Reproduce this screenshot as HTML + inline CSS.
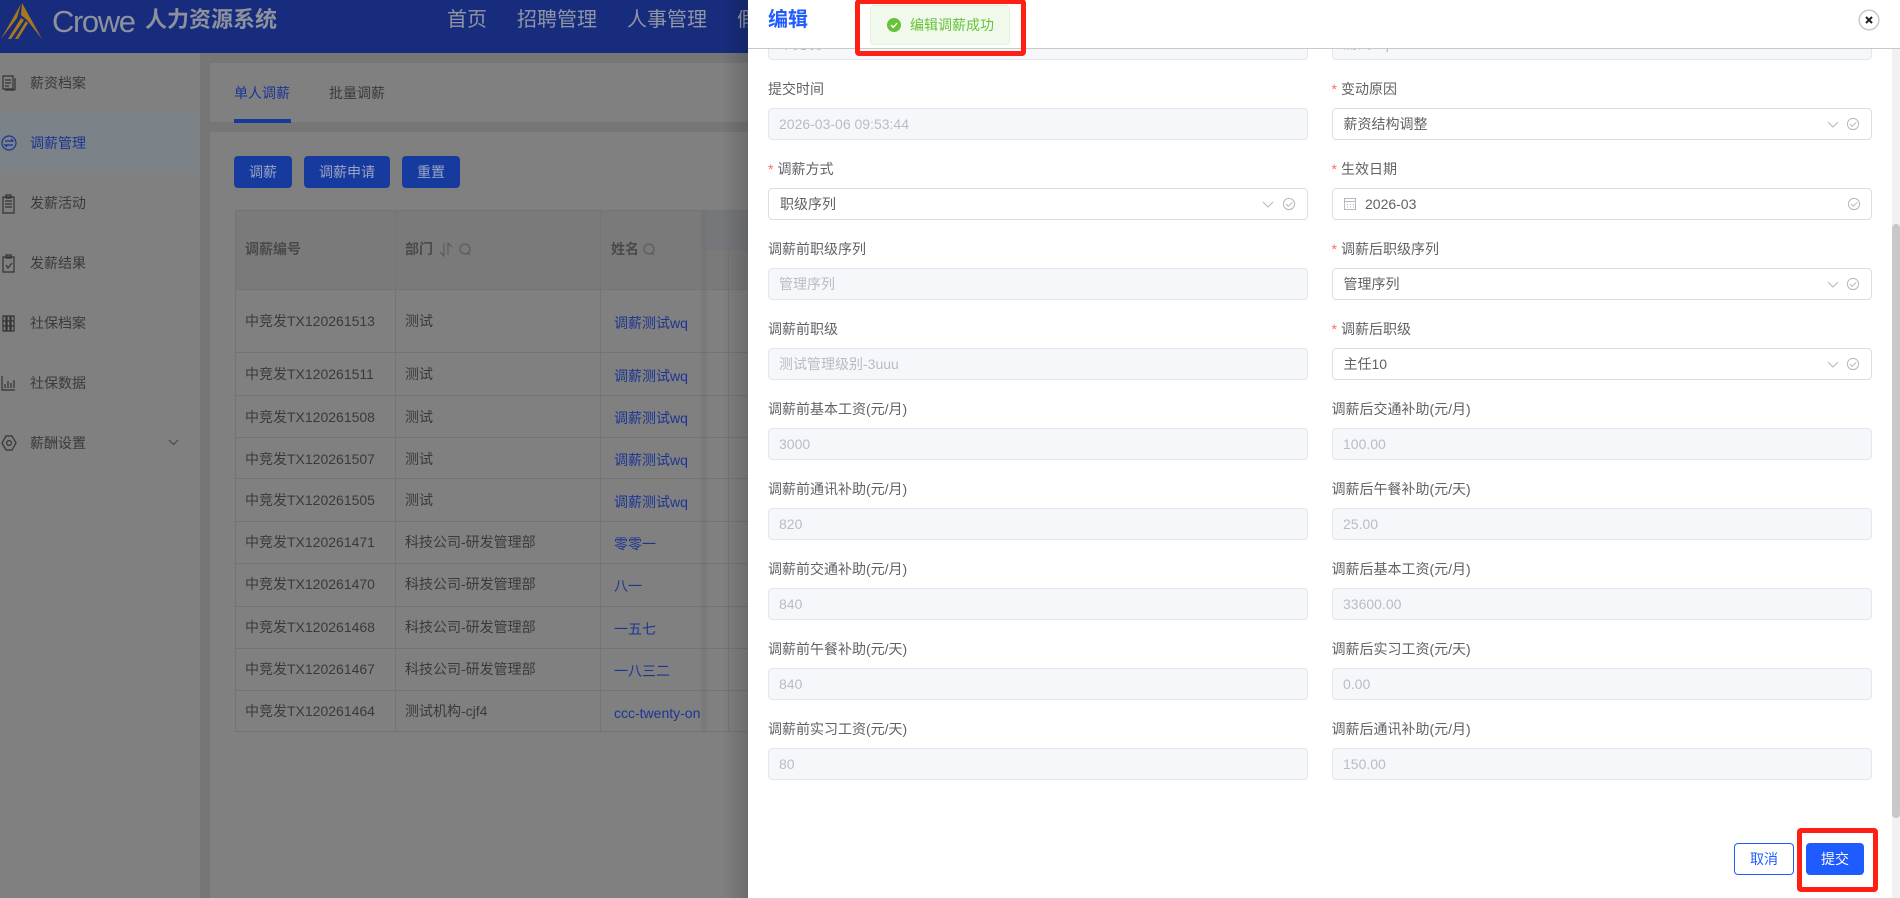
<!DOCTYPE html>
<html lang="zh"><head><meta charset="utf-8"><title>编辑</title>
<style>
*{box-sizing:border-box}
html,body{margin:0;padding:0;width:1900px;height:898px;overflow:hidden;background:#808080}
body{font-family:"Liberation Sans","Noto Sans CJK SC",sans-serif;font-size:14px;position:relative}
.a{position:absolute;white-space:nowrap}
.c{transform:translateY(-50%);line-height:20px}
.m{color:#3a3a3a}
.nm{color:#1b3593}
.ln{position:absolute;background:#737378}
.btn{position:absolute;top:156px;height:32px;background:#173a9e;border-radius:4px;color:#9aa4c4;line-height:32px;text-align:center}
.lb{position:absolute;color:#606266;line-height:20px;white-space:nowrap}
.lb i{color:#f56c6c;font-style:normal;margin-right:4px}
.in{position:absolute;width:540px;height:32px;border-radius:4px;line-height:30px;padding-left:10px;white-space:nowrap}
.d{background:#f5f7fa;border:1px solid #e4e7ed;color:#b9bcc4}
.s{background:#fff;border:1px solid #dcdfe6;color:#606266;padding-left:11px}
.ic{position:absolute;top:0;left:0}
</style></head><body>

<!-- header -->
<div class="a" style="left:0;top:0;width:748px;height:53px;background:#172c7c"></div>
<svg class="ic" width="46" height="42" viewBox="0 0 46 42"><path d="M22 3 L42 39 L27 20 L21 15 Z" fill="#a8781a"/><path d="M21 4 L1 39 L17 18 Z" fill="#a8781a"/><path d="M21 18 L8 39 L11 39 L24 20 Z M26 21 L15 39 L18 39 L28 23 Z" fill="#a8781a"/></svg>
<div class="a c" style="left:52px;top:22px;font-size:31px;line-height:34px;color:#8d919e;letter-spacing:-1.4px">Crowe</div>
<div class="a c" style="left:145px;top:20px;font-size:22px;font-weight:700;color:#8d919e">人力资源系统</div>
<div class="a c" style="left:447px;top:20px;font-size:20px;color:#8f94a6">首页</div>
<div class="a c" style="left:517px;top:20px;font-size:20px;color:#8f94a6">招聘管理</div>
<div class="a c" style="left:627px;top:20px;font-size:20px;color:#8f94a6">人事管理</div>
<div class="a c" style="left:737px;top:20px;font-size:20px;color:#8f94a6;width:11px;overflow:hidden">假期</div>

<!-- sidebar and gutters -->
<div class="a" style="left:200px;top:53px;width:548px;height:845px;background:#767676"></div>
<div class="a" style="left:0;top:113px;width:200px;height:60px;background:#7b8288"></div>
<svg class="ic" width="24" height="460" fill="none" stroke="#333" stroke-width="1.2">
<path d="M3 76h10v13H3zM5 90h10M15 78v12M5 80h6M5 83h6M5 86h4"/>
<circle cx="9" cy="143" r="7" stroke="#1b3593"/><path d="M5 141h8l-2-2M13 145H5l2 2" stroke="#1b3593"/>
<path d="M3 197h11v16H3zM6 195h5v3H6zM5 201h7M5 204h7M5 207h7"/>
<path d="M3 257h11v15H3zM6 255h5v3H6zM6 265l2 3 4-5"/>
<path d="M3 316h3v15H3zM7 316h3v15H7zM11 316h3v15h-3zM3 321h11M3 326h11"/>
<path d="M2 376v14h13M5 388v-4M8 388v-7M11 388v-5M14 388v-8"/>
<path d="M6 436h6l4 7-4 7H6l-4-7z"/><circle cx="9" cy="443" r="2.4"/>
</svg>
<div class="a c m" style="left:30px;top:83px">薪资档案</div>
<div class="a c nm" style="left:30px;top:143px">调薪管理</div>
<div class="a c m" style="left:30px;top:203px">发薪活动</div>
<div class="a c m" style="left:30px;top:263px">发薪结果</div>
<div class="a c m" style="left:30px;top:323px">社保档案</div>
<div class="a c m" style="left:30px;top:383px">社保数据</div>
<div class="a c m" style="left:30px;top:443px">薪酬设置</div>
<svg class="ic" style="left:168px;top:438px" width="11" height="9" fill="none" stroke="#444"><path d="M1 2l4.5 4.5L10 2"/></svg>

<!-- cards -->
<div class="a" style="left:210px;top:63px;width:538px;height:59px;background:#808080"></div>
<div class="a" style="left:210px;top:132px;width:538px;height:766px;background:#808080"></div>
<div class="a c nm" style="left:234px;top:93px">单人调薪</div>
<div class="a c m" style="left:329px;top:93px">批量调薪</div>
<div class="a" style="left:234px;top:119px;width:57px;height:4px;background:#173a9e"></div>
<div class="btn" style="left:234px;width:58px">调薪</div>
<div class="btn" style="left:304px;width:86px">调薪申请</div>
<div class="btn" style="left:402px;width:58px">重置</div>

<!-- table -->
<div class="a" style="left:235px;top:210px;width:513px;height:79px;background:#7a7a7a"></div>
<div class="a" style="left:701px;top:210px;width:47px;height:39px;background:#75777a"></div>
<div class="ln" style="left:235px;top:210px;width:513px;height:1px"></div>
<div class="ln" style="left:701px;top:249px;width:47px;height:1px"></div>
<div class="ln" style="left:235px;top:289px;width:513px;height:1px"></div>
<div class="ln" style="left:235px;top:352px;width:513px;height:1px"></div>
<div class="ln" style="left:235px;top:395px;width:513px;height:1px"></div>
<div class="ln" style="left:235px;top:437px;width:513px;height:1px"></div>
<div class="ln" style="left:235px;top:478px;width:513px;height:1px"></div>
<div class="ln" style="left:235px;top:521px;width:513px;height:1px"></div>
<div class="ln" style="left:235px;top:563px;width:513px;height:1px"></div>
<div class="ln" style="left:235px;top:606px;width:513px;height:1px"></div>
<div class="ln" style="left:235px;top:648px;width:513px;height:1px"></div>
<div class="ln" style="left:235px;top:690px;width:513px;height:1px"></div>
<div class="ln" style="left:235px;top:731px;width:513px;height:1px"></div>
<div class="ln" style="left:235px;top:210px;width:1px;height:522px"></div>
<div class="ln" style="left:395px;top:210px;width:1px;height:522px"></div>
<div class="ln" style="left:600px;top:210px;width:1px;height:522px"></div>
<div class="ln" style="left:728px;top:249px;width:1px;height:483px"></div>
<div class="a" style="left:701px;top:210px;width:6px;height:522px;background:#707070;opacity:.35"></div>

<div class="a c" style="left:245px;top:249px;font-weight:700;color:#4a4a4a">调薪编号</div>
<div class="a c" style="left:405px;top:249px;font-weight:700;color:#4a4a4a">部门</div>
<div class="a c" style="left:611px;top:249px;font-weight:700;color:#4a4a4a">姓名</div>
<svg class="ic" style="left:439px;top:242px" width="34" height="15" fill="none" stroke="#555"><path d="M5 1v13L1 10M9 13V1l4 4"/><circle cx="26" cy="7" r="5"/><path d="M29 11l2 2"/></svg>
<svg class="ic" style="left:641px;top:242px" width="16" height="15" fill="none" stroke="#555"><circle cx="8" cy="7" r="5"/><path d="M11 11l2 2"/></svg>

<div class="a c m" style="left:245px;top:321px">中竞发TX120261513</div><div class="a c m" style="left:405px;top:321px">测试</div><div class="a c nm" style="left:614px;top:323px">调薪测试wq</div>
<div class="a c m" style="left:245px;top:374px">中竞发TX120261511</div><div class="a c m" style="left:405px;top:374px">测试</div><div class="a c nm" style="left:614px;top:376px">调薪测试wq</div>
<div class="a c m" style="left:245px;top:417px">中竞发TX120261508</div><div class="a c m" style="left:405px;top:417px">测试</div><div class="a c nm" style="left:614px;top:418px">调薪测试wq</div>
<div class="a c m" style="left:245px;top:459px">中竞发TX120261507</div><div class="a c m" style="left:405px;top:459px">测试</div><div class="a c nm" style="left:614px;top:460px">调薪测试wq</div>
<div class="a c m" style="left:245px;top:500px">中竞发TX120261505</div><div class="a c m" style="left:405px;top:500px">测试</div><div class="a c nm" style="left:614px;top:502px">调薪测试wq</div>
<div class="a c m" style="left:245px;top:542px">中竞发TX120261471</div><div class="a c m" style="left:405px;top:542px">科技公司-研发管理部</div><div class="a c nm" style="left:614px;top:544px">零零一</div>
<div class="a c m" style="left:245px;top:584px">中竞发TX120261470</div><div class="a c m" style="left:405px;top:584px">科技公司-研发管理部</div><div class="a c nm" style="left:614px;top:586px">八一</div>
<div class="a c m" style="left:245px;top:627px">中竞发TX120261468</div><div class="a c m" style="left:405px;top:627px">科技公司-研发管理部</div><div class="a c nm" style="left:614px;top:629px">一五七</div>
<div class="a c m" style="left:245px;top:669px">中竞发TX120261467</div><div class="a c m" style="left:405px;top:669px">科技公司-研发管理部</div><div class="a c nm" style="left:614px;top:671px">一八三二</div>
<div class="a c m" style="left:245px;top:711px">中竞发TX120261464</div><div class="a c m" style="left:405px;top:711px">测试机构-cjf4</div><div class="a c nm" style="left:614px;top:713px;width:87px;overflow:hidden">ccc-twenty-one</div>

<div class="a" style="left:722px;top:0;width:26px;height:898px;background:linear-gradient(90deg,rgba(0,0,0,0),rgba(0,0,0,.16))"></div>

<!-- drawer -->
<div class="a" style="left:748px;top:0;width:1152px;height:898px;background:#fff"></div>

<div class="in d" style="left:768px;top:28px">中竞发</div>
<div class="in d" style="left:1332px;top:28px">测试wq</div>

<div class="a" style="left:748px;top:0;width:1152px;height:49px;background:#fff;border-bottom:1px solid #c9c9c9"></div>
<div class="a c" style="left:768px;top:20px;font-size:20px;font-weight:700;color:#1f5cff">编辑</div>
<svg class="ic" style="left:1858px;top:9px" width="22" height="22" fill="none"><circle cx="11" cy="11" r="9.8" stroke="#ccc" stroke-width="1.6"/><path d="M8 8l6 6M14 8l-6 6" stroke="#222" stroke-width="2"/></svg>

<div class="a" style="left:1892px;top:49px;width:8px;height:849px;background:#f1f1f1"></div>
<div class="a" style="left:1892px;top:224px;width:8px;height:594px;background:#c8c8c8;border-radius:4px"></div>

<!-- form left -->
<div class="lb" style="left:768px;top:79px">提交时间</div><div class="in d" style="left:768px;top:108px">2026-03-06 09:53:44</div>
<div class="lb" style="left:768px;top:159px"><i>*</i>调薪方式</div><div class="in s" style="left:768px;top:188px">职级序列</div>
<div class="lb" style="left:768px;top:239px">调薪前职级序列</div><div class="in d" style="left:768px;top:268px">管理序列</div>
<div class="lb" style="left:768px;top:319px">调薪前职级</div><div class="in d" style="left:768px;top:348px">测试管理级别-3uuu</div>
<div class="lb" style="left:768px;top:399px">调薪前基本工资(元/月)</div><div class="in d" style="left:768px;top:428px">3000</div>
<div class="lb" style="left:768px;top:479px">调薪前通讯补助(元/月)</div><div class="in d" style="left:768px;top:508px">820</div>
<div class="lb" style="left:768px;top:559px">调薪前交通补助(元/月)</div><div class="in d" style="left:768px;top:588px">840</div>
<div class="lb" style="left:768px;top:639px">调薪前午餐补助(元/天)</div><div class="in d" style="left:768px;top:668px">840</div>
<div class="lb" style="left:768px;top:719px">调薪前实习工资(元/天)</div><div class="in d" style="left:768px;top:748px">80</div>

<!-- form right -->
<div class="lb" style="left:1331.500px;top:79px"><i>*</i>变动原因</div><div class="in s" style="left:1332px;top:108px;padding-left:10.500px">薪资结构调整</div>
<div class="lb" style="left:1331.500px;top:159px"><i>*</i>生效日期</div><div class="in s" style="left:1332px;top:188px;padding-left:32px">2026-03</div>
<div class="lb" style="left:1331.500px;top:239px"><i>*</i>调薪后职级序列</div><div class="in s" style="left:1332px;top:268px;padding-left:10.500px">管理序列</div>
<div class="lb" style="left:1331.500px;top:319px"><i>*</i>调薪后职级</div><div class="in s" style="left:1332px;top:348px;padding-left:10.500px">主任10</div>
<div class="lb" style="left:1331.500px;top:399px">调薪后交通补助(元/月)</div><div class="in d" style="left:1332px;top:428px">100.00</div>
<div class="lb" style="left:1331.500px;top:479px">调薪后午餐补助(元/天)</div><div class="in d" style="left:1332px;top:508px">25.00</div>
<div class="lb" style="left:1331.500px;top:559px">调薪后基本工资(元/月)</div><div class="in d" style="left:1332px;top:588px">33600.00</div>
<div class="lb" style="left:1331.500px;top:639px">调薪后实习工资(元/天)</div><div class="in d" style="left:1332px;top:668px">0.00</div>
<div class="lb" style="left:1331.500px;top:719px">调薪后通讯补助(元/月)</div><div class="in d" style="left:1332px;top:748px">150.00</div>

<!-- select icons -->
<svg class="ic" width="1900" height="400" fill="none" stroke="#b5b8bf" stroke-width="1" style="pointer-events:none">
<path d="M1263 202l5 5 5-5"/><circle cx="1289" cy="204" r="5.6"/><path d="M1286 204l2.3 2.3 4-4"/>
<path d="M1828 122l5 5 5-5"/><circle cx="1853" cy="124" r="5.6"/><path d="M1850 124l2.3 2.3 4-4"/>
<circle cx="1854" cy="204" r="5.6"/><path d="M1851 204l2.3 2.3 4-4"/>
<path d="M1828 282l5 5 5-5"/><circle cx="1853" cy="284" r="5.6"/><path d="M1850 284l2.3 2.3 4-4"/>
<path d="M1828 362l5 5 5-5"/><circle cx="1853" cy="364" r="5.6"/><path d="M1850 364l2.3 2.3 4-4"/>
<path d="M1344.500 198.500h11v11h-11zM1344.500 201.500h11M1347 204.500h1M1350 204.500h1M1353 204.500h1M1347 207h1M1350 207h1M1353 207h1"/>
</svg>

<!-- toast -->
<div class="a" style="left:870px;top:5px;width:140px;height:40px;background:#f0f9eb;border:1px solid #e1f3d8;border-radius:4px"></div>
<svg class="ic" style="left:887px;top:18px" width="14" height="14"><circle cx="7" cy="7" r="7" fill="#67c23a"/><path d="M4 7l2.300 2.300L10 5.200" fill="none" stroke="#fff" stroke-width="1.400"/></svg>
<div class="a c" style="left:910px;top:25px;color:#67c23a">编辑调薪成功</div>

<!-- footer buttons -->
<div class="a" style="left:1734px;top:843px;width:60px;height:32px;border:1px solid #1f5cff;border-radius:4px;background:#fff;color:#1f5cff;text-align:center;line-height:30px">取消</div>
<div class="a" style="left:1806px;top:843px;width:58px;height:32px;border-radius:4px;background:#1f5cff;color:#fff;text-align:center;line-height:32px">提交</div>

<!-- annotations -->
<div class="a" style="left:855px;top:-1px;width:171px;height:57px;border:5px solid #ff2015;border-radius:4px"></div>
<div class="a" style="left:1797px;top:828px;width:81px;height:64px;border:5px solid #ff2015;border-radius:4px"></div>
</body></html>
